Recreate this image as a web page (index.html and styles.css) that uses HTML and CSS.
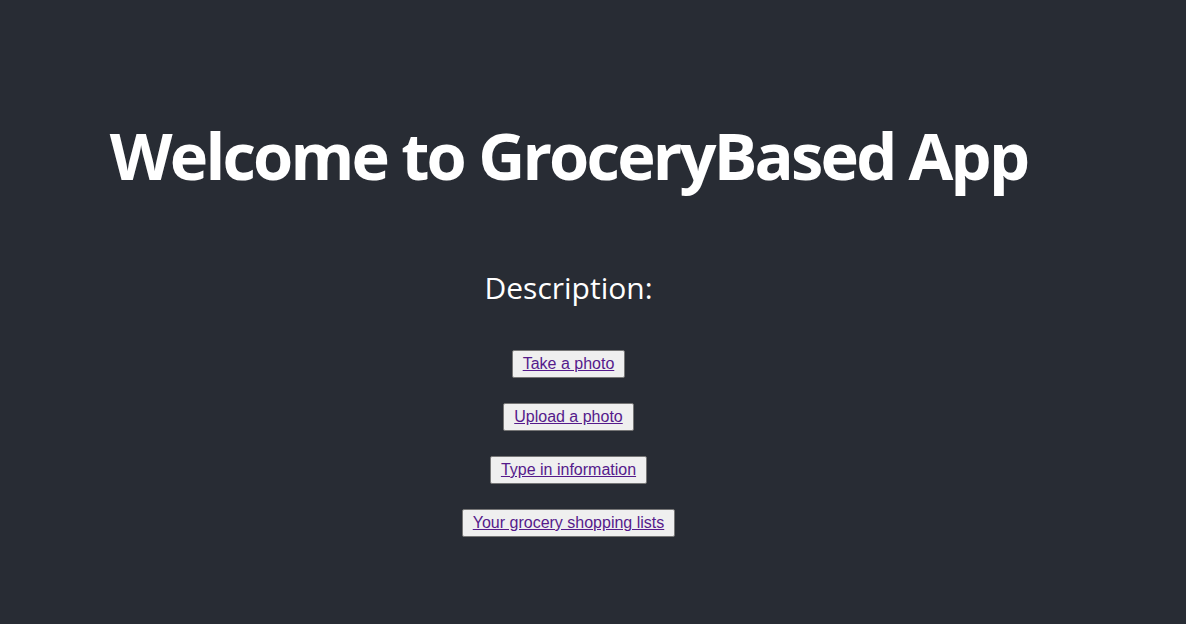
FILE: index.html
```html
<!DOCTYPE html>
<html>
<head>
<meta charset="utf-8">
<title>GroceryBased App</title>
<link rel="stylesheet" href="styles.css">
</head>
<body>
<div class="app">
  <header class="app-header">
    <h1 class="title">Welcome to GroceryBased App</h1>
    <p class="description">Description:</p>
    <div class="actions">
      <button class="btn"><a href="#take">Take a photo</a></button>
      <button class="btn"><a href="#upload">Upload a photo</a></button>
      <button class="btn"><a href="#type">Type in information</a></button>
      <button class="btn"><a href="#lists">Your grocery shopping lists</a></button>
    </div>
  </header>
</div>
</body>
</html>
```
FILE: styles.css
```css
html, body {
  margin: 0;
  padding: 0;
  background: #282c34;
  height: 100%;
}
.app {
  min-height: 100%;
  background: #282c34;
  color: #ffffff;
  font-family: "Open Sans", "Noto Sans", sans-serif;
}
.app-header {
  display: flex;
  flex-direction: column;
  align-items: center;
  padding-right: 49px;
  padding-top: 107px;
}
.title {
  margin: 0;
  font-size: 65px;
  font-weight: 700;
  letter-spacing: -2.8px;
  line-height: 96px;
}
.description {
  margin: 65px 0 0 0;
  font-size: 30px;
  line-height: 40px;
}
.actions {
  display: flex;
  flex-direction: column;
  align-items: center;
  gap: 25px;
  margin-top: 42px;
}
.btn {
  font-family: "Liberation Sans", Arial, sans-serif;
  font-size: 16px;
  line-height: 20px;
  background: #efefef;
  border: 1px solid #767676;
  border-radius: 2px;
  padding: 3px 10px;
  margin: 0;
}
.btn a {
  color: #551a8b;
  text-decoration: underline;
}
```
